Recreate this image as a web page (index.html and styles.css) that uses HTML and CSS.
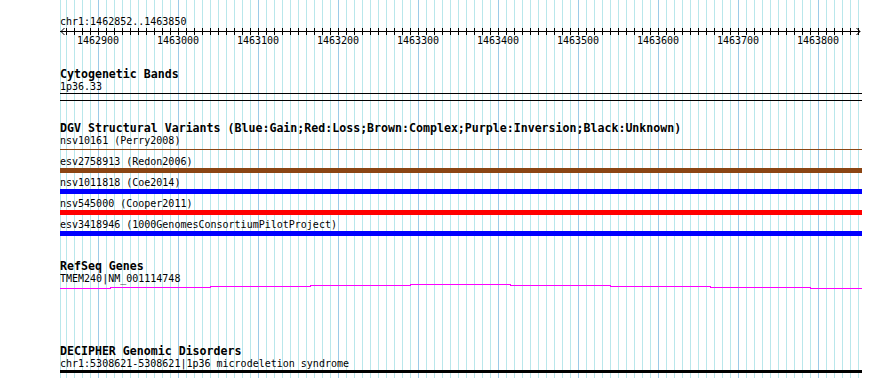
FILE: index.html
```html
<!DOCTYPE html>
<html lang="en">
<head>
    <meta charset="UTF-8">
    <title>chr1:1462852..1463850</title>
    <link rel="stylesheet" href="styles.css">
</head>
<body>
    <div class="view">
        <div class="locus">chr1:1462852..1463850</div>

        <!-- ruler: ticks every 10bp, labels every 100bp -->
        <div class="axis">
            <svg class="arrow arrow-left" width="5" height="7" viewBox="0 0 5 7"><path d="M4.5 0 L1 3.5 L4.5 7"/></svg>
            <svg class="arrow arrow-right" width="5" height="7" viewBox="0 0 5 7"><path d="M0.5 0 L4 3.5 L0.5 7"/></svg>
        </div>
        <div class="axis-labels">
            <span>1462900</span>
            <span>1463000</span>
            <span>1463100</span>
            <span>1463200</span>
            <span>1463300</span>
            <span>1463400</span>
            <span>1463500</span>
            <span>1463600</span>
            <span>1463700</span>
            <span>1463800</span>
        </div>

        <div class="track cyto">
            <div class="track-title">Cytogenetic Bands</div>
            <div class="feature-label">1p36.33</div>
            <div class="band"></div>
        </div>

        <div class="track dgv">
            <div class="track-title">DGV Structural Variants (Blue:Gain;Red:Loss;Brown:Complex;Purple:Inversion;Black:Unknown)</div>
            <div class="feature">
                <div class="feature-label">nsv10161 (Perry2008)</div>
                <div class="bar bar-thin"></div>
            </div>
            <div class="feature">
                <div class="feature-label">esv2758913 (Redon2006)</div>
                <div class="bar brown"></div>
            </div>
            <div class="feature">
                <div class="feature-label">nsv1011818 (Coe2014)</div>
                <div class="bar blue"></div>
            </div>
            <div class="feature">
                <div class="feature-label">nsv545000 (Cooper2011)</div>
                <div class="bar red"></div>
            </div>
            <div class="feature">
                <div class="feature-label">esv3418946 (1000GenomesConsortiumPilotProject)</div>
                <div class="bar blue"></div>
            </div>
        </div>

        <div class="track refseq">
            <div class="track-title">RefSeq Genes</div>
            <div class="feature-label">TMEM240|NM_001114748</div>
            <svg class="gene" width="802" height="5" viewBox="0 0 802 5">
                <rect x="0" y="4" width="51" height="1"/>
                <rect x="50" y="3" width="101" height="1"/>
                <rect x="150" y="2" width="101" height="1"/>
                <rect x="250" y="1" width="101" height="1"/>
                <rect x="350" y="0" width="101" height="1"/>
                <rect x="450" y="1" width="101" height="1"/>
                <rect x="550" y="2" width="101" height="1"/>
                <rect x="650" y="3" width="101" height="1"/>
                <rect x="750" y="4" width="52" height="1"/>
            </svg>
        </div>

        <div class="track decipher">
            <div class="track-title">DECIPHER Genomic Disorders</div>
            <div class="feature-label">chr1:5308621-5308621|1p36 microdeletion syndrome</div>
            <div class="bar bar-black"></div>
        </div>
    </div>
</body>
</html>
```

FILE: styles.css
```css
body {
    margin: 0;
    background-color: #fff;
    color: #000;
    font-family: "DejaVu Sans Mono", "Liberation Mono", monospace;
    font-size: 10px;
}
.view {
    position: relative;
    box-sizing: border-box;
    margin-left: 60px;
    width: 802px;
    height: 378px;
    padding-top: 15px;
    overflow: hidden;
    /* grid: dark line every 100bp, light every 10bp, plus left edge */
    background-image:
        linear-gradient(to right, #9ccbe8 1px, transparent 1px),
        linear-gradient(to right, #b9e7eb 1px, transparent 1px),
        linear-gradient(to right, #b9e7eb 1px, transparent 1px);
    background-size: 80px 100%, 8px 100%, 1px 100%;
    background-position: 38px 0, 6px 0, 0 0;
    background-repeat: repeat-x, repeat-x, no-repeat;
}
.locus {
    height: 12px;
    line-height: 14px;
}
.axis {
    position: relative;
    margin-top: 1px;
    height: 7px;
    background-image:
        linear-gradient(#000, #000),
        linear-gradient(to right, #000 1px, transparent 1px);
    background-size: 800px 1px, 8px 7px;
    background-position: 0 3px, 6px 0;
    background-repeat: no-repeat, repeat-x;
}
.arrow {
    position: absolute;
    top: 0;
    fill: none;
    stroke: #000;
    stroke-width: 1;
}
.arrow-left {
    left: 0;
}
.arrow-right {
    left: 796px;
}
.axis-labels {
    display: flex;
    margin-left: -2px;
    height: 12px;
    line-height: 12px;
}
.axis-labels span {
    flex: none;
    width: 80px;
    text-align: center;
}
.track-title {
    height: 13px;
    line-height: 15px;
    font-size: 11.6px;
    font-weight: bold;
    white-space: nowrap;
}
.feature-label {
    height: 12px;
    line-height: 14px;
    white-space: nowrap;
}
.cyto {
    margin-top: 20px;
}
.band {
    box-sizing: border-box;
    margin-top: 1px;
    height: 8px;
    border-top: 1px solid #000;
    border-bottom: 1px solid #000;
}
.dgv {
    margin-top: 20px;
}
.feature {
    padding-bottom: 3px;
}
.bar {
    height: 5px;
    margin-top: 1px;
}
.bar-thin {
    background: linear-gradient(#8b4513, #8b4513) 0 2px / 100% 1px no-repeat;
}
.brown {
    background-color: #8b4513;
}
.blue {
    background-color: #0000ff;
}
.red {
    background-color: #ff0000;
}
.refseq {
    margin-top: 20px;
}
.gene {
    display: block;
    fill: #ff00ff;
}
.decipher {
    margin-top: 55px;
}
.bar-black {
    height: 3px;
    background-color: #000;
}
```
